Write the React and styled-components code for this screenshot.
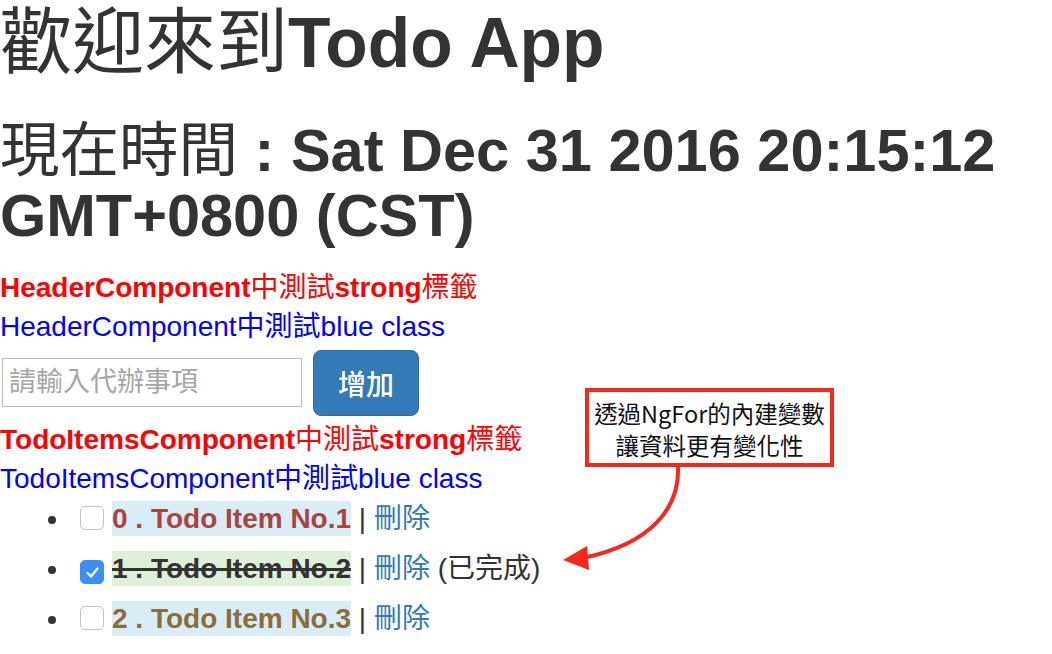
import React from "react";
import styled, { createGlobalStyle } from "styled-components";

const GlobalStyle = createGlobalStyle`
  html, body {
    margin: 0;
    padding: 0;
    background: #fff;
  }
  body {
    font-family: "Liberation Sans", "Noto Sans CJK TC", sans-serif;
    font-size: 28px;
    line-height: 39.4px;
    color: #333;
  }
`;

const Page = styled.div`
  position: relative;
  width: 1052px;
  min-height: 654px;
  overflow: hidden;
`;

const Title = styled.h1`
  font-size: 69.5px;
  font-weight: 700;
  line-height: 78px;
  margin: 0 0 36px;
  padding-top: 3px;
  color: #333;
`;

const SubTitle = styled.h2`
  font-size: 59.5px;
  font-weight: 700;
  line-height: 65px;
  margin: 0 0 20px;
  color: #333;
`;

const Cjk = styled.span`
  font-weight: 400;
  font-size: ${(p) => p.$size || "inherit"};
`;

const RedStrong = styled.strong`
  display: block;
  color: #ff0000;
  font-weight: 700;
`;

const BlueLine = styled.div`
  color: #0000ff;
`;

const AddRow = styled.div`
  display: flex;
  align-items: center;
  gap: 11px;
  padding: 3px 0 4px 2px;
`;

const TextInput = styled.input`
  box-sizing: border-box;
  width: 300px;
  height: 49px;
  border: 1px solid #bcbcbc;
  border-radius: 0;
  padding: 0 6px;
  font-family: "Liberation Sans", "Noto Sans CJK TC", sans-serif;
  font-size: 27px;
  color: #333;
  outline: none;
  &::placeholder {
    color: #a6a6a6;
  }
`;

const AddButton = styled.button`
  box-sizing: border-box;
  height: 66px;
  padding: 0 24px;
  border: 1px solid #2e6da4;
  border-radius: 8px;
  background: #337ab7;
  color: #fff;
  font-family: "Liberation Sans", "Noto Sans CJK TC", sans-serif;
  font-size: 28px;
  font-weight: 500;
  cursor: pointer;
`;

const TodoList = styled.ul`
  margin: 0;
  padding: 0 0 0 80px;
  list-style: none;
`;

const TodoRow = styled.li`
  line-height: 39px;
  padding: 0 0 11px;
  &::before {
    content: "";
    display: inline-block;
    width: 8px;
    height: 8px;
    border-radius: 50%;
    background: #333;
    margin-left: -32px;
    margin-right: 24px;
    vertical-align: 4px;
  }
`;

const CheckBox = styled.span`
  display: inline-flex;
  align-items: center;
  justify-content: center;
  box-sizing: border-box;
  width: 24px;
  height: 24px;
  margin-right: 8px;
  vertical-align: -2px;
  border-radius: 5px;
  border: 1px solid ${(p) => (p.$checked ? "#3b8ef3" : "#c2c2c2")};
  background: ${(p) => (p.$checked ? "#3b8ef3" : "#fff")};
`;

const ItemLabel = styled.span`
  font-weight: 700;
  padding: 2px 0;
  background: ${(p) => p.$bg};
  color: ${(p) => p.$color};
  text-decoration: ${(p) => (p.$done ? "line-through" : "none")};
  text-decoration-thickness: 3px;
`;

const Sep = styled.span`
  color: #333;
`;

const DeleteLink = styled.a`
  color: #337ab7;
  text-decoration: none;
`;

const Note = styled.div`
  position: absolute;
  left: 585px;
  top: 388px;
  box-sizing: border-box;
  width: 249px;
  height: 79px;
  border: 4px solid #f4281c;
  background: #fff;
  font-family: "Noto Sans CJK TC", sans-serif;
  font-size: 23.5px;
  line-height: 32px;
  color: #111;
  text-align: center;
  padding-top: 5px;
  white-space: nowrap;
`;

const Arrow = styled.svg`
  position: absolute;
  left: 555px;
  top: 464px;
`;

const todos = [
  { text: "0 . Todo Item No.1", bg: "#d9edf7", color: "#a94442", done: false },
  { text: "1 . Todo Item No.2", bg: "#dff0d8", color: "#333", done: true },
  { text: "2 . Todo Item No.3", bg: "#d9edf7", color: "#8a6d3b", done: false },
];

export default function App() {
  return (
    <Page>
      <GlobalStyle />
      <Title>
        <Cjk $size="72px">歡迎來到</Cjk>Todo App
      </Title>
      <SubTitle>
        <Cjk>現在時間</Cjk> : Sat Dec 31 2016 20:15:12 GMT+0800 (CST)
      </SubTitle>

      <RedStrong>
        HeaderComponent<Cjk>中測試</Cjk>strong<Cjk>標籤</Cjk>
      </RedStrong>
      <BlueLine>HeaderComponent中測試blue class</BlueLine>

      <AddRow>
        <TextInput placeholder="請輸入代辦事項" />
        <AddButton>增加</AddButton>
      </AddRow>

      <RedStrong>
        TodoItemsComponent<Cjk>中測試</Cjk>strong<Cjk>標籤</Cjk>
      </RedStrong>
      <BlueLine>TodoItemsComponent中測試blue class</BlueLine>

      <TodoList>
        {todos.map((t) => (
          <TodoRow key={t.text}>
            <CheckBox $checked={t.done}>
              {t.done && (
                <svg width="15" height="15" viewBox="0 0 15 15">
                  <path d="M2.5 8 L6 11.5 L12.5 3.5" fill="none" stroke="#fff" strokeWidth="2.2" strokeLinecap="round" strokeLinejoin="round" />
                </svg>
              )}
            </CheckBox>
            <ItemLabel $bg={t.bg} $color={t.color} $done={t.done}>
              {t.text}
            </ItemLabel>
            <Sep> | </Sep>
            <DeleteLink href="#">刪除</DeleteLink>
            {t.done && <Sep> (已完成)</Sep>}
          </TodoRow>
        ))}
      </TodoList>

      <Note>
        透過NgFor的內建變數
        <br />
        讓資料更有變化性
      </Note>
      <Arrow width="130" height="112" viewBox="0 0 130 112">
        <path d="M123 2 C 125 45, 95 80, 28 94" fill="none" stroke="#f4281c" strokeWidth="4" />
        <polygon points="8,96 32,82 34,106" fill="#f4281c" />
      </Arrow>
    </Page>
  );
}
